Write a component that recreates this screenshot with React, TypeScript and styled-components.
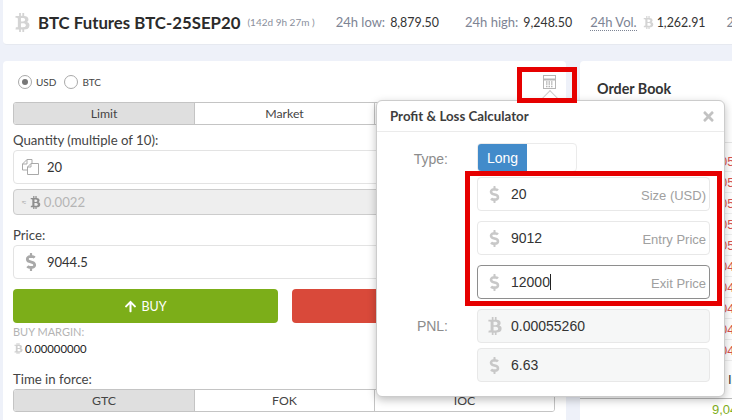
import React from 'react';
import styled, { createGlobalStyle } from 'styled-components';
import { FaArrowUp, FaBtc, FaDollarSign, FaTimes } from 'react-icons/fa';

const GlobalStyle = createGlobalStyle`
  html, body { margin: 0; padding: 0; height: 420px; overflow: hidden; background: #eef1f9; }
  * { box-sizing: border-box; }
  body { font-family: "Lato", "Noto Sans", sans-serif; color: #333; }
`;

const Page = styled.div`
  position: relative;
  width: 732px;
  height: 420px;
  overflow: hidden;
  display: flex;
  flex-direction: column;
  gap: 16px;
  padding-left: 3px;
`;

const Header = styled.header`
  height: 45px;
  width: 760px;
  flex: none;
  background: #fff;
  border-radius: 0 0 0 4px;
  border-bottom: 1px solid #e6e9f0;
  display: flex;
  align-items: center;
  padding-left: 10px;
  white-space: nowrap;
`;

const Title = styled.h1`
  margin: 0 0 0 6px;
  font-size: 16.8px;
  font-weight: 700;
  color: #2b2b2b;
`;

const Countdown = styled.span`
  margin-left: 7px;
  font-size: 10px;
  color: #8a8f9c;
`;

const Stat = styled.span<{ $gap: number }>`
  margin-left: ${(p) => p.$gap}px;
  font-size: 13px;
  color: #7d8494;
  display: inline-flex;
  align-items: center;
  gap: 5px;
`;

const StatValue = styled.span`
  font-size: 12.4px;
  color: #333;
`;

const Dotted = styled.span`
  border-bottom: 1px dotted #7d8494;
`;

const VolCoin = styled(FaBtc)`
  margin-right: -3px;
  color: #d4d4d4;
`;

const Body = styled.div`
  display: flex;
  gap: 14px;
  flex: 1;
`;

const OrderPanel = styled.section`
  width: 563px;
  flex: none;
  background: #fff;
  border-radius: 4px 4px 0 0;
  padding: 11px 11px 0 10px;
`;

const RadioRow = styled.div`
  height: 20px;
  display: flex;
  align-items: center;
  padding-left: 5px;
  font-size: 10px;
  color: #444;
`;

const Radio = styled.span<{ $on?: boolean }>`
  width: 14px;
  height: 14px;
  border-radius: 50%;
  border: 1px solid #a9a9a9;
  display: inline-flex;
  align-items: center;
  justify-content: center;
  margin-right: 4px;
  &::after {
    content: '';
    width: 6px;
    height: 6px;
    border-radius: 50%;
    background: ${(p) => (p.$on ? '#777' : 'transparent')};
  }
`;

const RadioLabel = styled.span`
  margin-right: 8px;
`;

const Tabs = styled.div<{ $top: number }>`
  margin-top: ${(p) => p.$top}px;
  height: 23px;
  display: grid;
  grid-template-columns: repeat(3, 1fr);
  border: 1px solid #c4c4c4;
  border-radius: 3px;
  overflow: hidden;
`;

const Tab = styled.div<{ $active?: boolean }>`
  display: flex;
  align-items: center;
  justify-content: center;
  font-size: 12.3px;
  color: #444;
  background: ${(p) => (p.$active ? '#dfdfdf' : '#fff')};
  & + & { border-left: 1px solid #c4c4c4; }
`;

const FieldLabel = styled.div<{ $top: number }>`
  margin-top: ${(p) => p.$top}px;
  font-size: 13.2px;
  line-height: 16px;
  color: #444;
`;

const InputBox = styled.div`
  margin-top: 2px;
  height: 34px;
  border: 1px solid #e3e3e3;
  border-radius: 4px;
  display: flex;
  align-items: center;
  font-size: 13px;
  color: #333;
`;

const IconSlot = styled.span`
  width: 33px;
  flex: none;
  display: flex;
  justify-content: center;
  color: #a9a9a9;
`;

const DisabledBox = styled.div`
  margin-top: 5px;
  height: 26px;
  background: #eee;
  border: 1px solid #ccc;
  border-radius: 4px;
  display: flex;
  align-items: center;
  gap: 2px;
  padding-left: 7px;
  font-size: 13.2px;
  color: #b5b5b5;
`;

const TinyApprox = styled.span`
  font-size: 10px;
`;

const ButtonRow = styled.div`
  margin-top: 10px;
  display: flex;
  gap: 14px;
`;

const TradeButton = styled.div<{ $color: string }>`
  width: 265px;
  flex: none;
  height: 34px;
  border-radius: 4px;
  background: ${(p) => p.$color};
  color: #fff;
  font-size: 12.5px;
  display: flex;
  align-items: center;
  justify-content: center;
  gap: 4px;
`;

const MarginLabel = styled.div`
  margin-top: 1px;
  font-size: 11px;
  line-height: 15px;
  color: #b4b4b4;
`;

const MarginValue = styled.div`
  margin-top: 2px;
  font-size: 11.3px;
  line-height: 15px;
  color: #222;
  display: flex;
  align-items: center;
  gap: 1px;
`;

const BookPanel = styled.section`
  flex: 1;
  background: #fff;
  border-radius: 4px 0 0 0;
  padding-top: 18px;
  font-family: "Liberation Sans", Arial, sans-serif;
  font-size: 13px;
  white-space: nowrap;
  overflow: hidden;
`;

const BookTitle = styled.h2`
  margin: 0 0 0 17px;
  font-family: "Lato", "Noto Sans", sans-serif;
  font-size: 14.3px;
  line-height: 19px;
  font-weight: 700;
  color: #333;
`;

const BookHead = styled.div`
  margin-top: 25px;
  height: 20px;
  border-bottom: 1px solid #e6e6e6;
`;

const AskRows = styled.div`
  margin-top: 8px;
`;

const AskRow = styled.div`
  height: 21px;
  line-height: 21px;
  padding-left: 122px;
  color: #d9534f;
  border-bottom: 1px solid #eee;
`;

const IndexRow = styled.div`
  margin-top: 8px;
  height: 30px;
  line-height: 22px;
  padding-left: 148px;
  color: #333;
  border-bottom: 1px solid #bbb;
`;

const BidRow = styled.div`
  height: 21px;
  line-height: 21px;
  padding-left: 132px;
  color: #7fae1b;
`;

// marker icon on the panel corner
const CalcTrigger = styled.span`
  position: absolute;
  left: 543px;
  top: 75px;
  color: #b5b5b5;
  display: flex;
`;

const Annotation = styled.div<{ $l: number; $t: number; $w: number; $h: number }>`
  position: absolute;
  left: ${(p) => p.$l}px;
  top: ${(p) => p.$t}px;
  width: ${(p) => p.$w}px;
  height: ${(p) => p.$h}px;
  border: 5px solid #e60000;
  z-index: 5;
`;

const Popover = styled.div`
  position: absolute;
  left: 376px;
  top: 100px;
  width: 349px;
  height: 297px;
  background: #fff;
  border: 1px solid #ccc;
  border-radius: 6px;
  box-shadow: 0 3px 8px rgba(0, 0, 0, 0.25);
  font-family: "Liberation Sans", Arial, sans-serif;
  z-index: 3;
  &::before {
    content: '';
    position: absolute;
    left: 166px;
    top: -8px;
    width: 13px;
    height: 13px;
    background: #fff;
    border-left: 1px solid #ccc;
    border-top: 1px solid #ccc;
    transform: rotate(45deg);
  }
`;

const PopTitle = styled.div`
  height: 31px;
  border-bottom: 1px solid #ebebeb;
  padding: 0 8px 0 13px;
  display: flex;
  align-items: center;
  justify-content: space-between;
  font-family: "Lato", "Noto Sans", sans-serif;
  font-weight: 700;
  font-size: 13.3px;
  color: #3d3d3d;
  position: relative;
`;

const Close = styled.span`
  display: flex;
  color: #c2c2c2;
`;

const PopBody = styled.div`
  display: grid;
  grid-template-columns: 71px 233px;
  column-gap: 29px;
  padding: 11px 15px 0 0;
  align-items: center;
`;

const RowLabel = styled.div<{ $top?: number }>`
  margin-top: ${(p) => p.$top ?? 0}px;
  text-align: right;
  font-size: 14px;
  color: #8c8c8c;
`;

const TypeToggle = styled.div`
  width: 100px;
  height: 29px;
  border: 1px solid #ebebeb;
  border-radius: 4px;
  overflow: hidden;
`;

const LongButton = styled.div`
  width: 49px;
  height: 100%;
  background: #428bca;
  color: #fff;
  font-size: 14px;
  display: flex;
  align-items: center;
  justify-content: center;
`;

const CalcInput = styled.div<{ $top: number; $focus?: boolean; $grey?: boolean }>`
  grid-column: 2;
  margin-top: ${(p) => p.$top}px;
  height: 34px;
  border: 1px solid ${(p) => (p.$focus ? '#8e8e8e' : '#e8e8e8')};
  border-radius: 4px;
  background: ${(p) => (p.$grey ? '#f6f7f7' : '#fff')};
  display: flex;
  align-items: center;
  font-size: 14px;
  color: #333;
  padding-right: 3px;
`;

const CalcIcon = styled.span`
  width: 33px;
  flex: none;
  display: flex;
  justify-content: center;
  color: #c8c8c8;
`;

const CalcHint = styled.span`
  margin-left: auto;
  font-size: 13px;
  color: #a0a0a0;
  padding-top: 2px;
`;

const Caret = styled.span`
  display: inline-block;
  width: 1px;
  height: 16px;
  background: #222;
  vertical-align: -3px;
`;

const Copies = () => (
  <svg width="17" height="16" viewBox="0 0 17 16" fill="none" stroke="#a9a9a9" strokeWidth="1">
    <path d="M5.5 11H.5V5L5 .5h5v4" />
    <path d="M5.5 15.5V8l3.5-3.500h7.500v11z" />
    <path d="M5 .5V5H.5M9 4.500V8H5.500" />
  </svg>
);

const Calculator = () => (
  <svg width="13" height="14" viewBox="0 0 13 14" fill="none" stroke="currentColor">
    <rect x=".5" y=".5" width="12" height="13" />
    <path d="M.5 4.500h12" strokeWidth="2" />
    <path d="M3 7h7M3 9h7M3 11.500h7" strokeDasharray="1.500 1" strokeWidth="1.500" />
  </svg>
);

const askRows = ['05', '05', '05', '05', '05', '04', '04', '04', '04', '04'];

export default function App() {
  return (
    <Page>
      <GlobalStyle />
      <Header>
        <FaBtc size={19} color="#d4d4d4" />
        <Title>BTC Futures BTC-25SEP20</Title>
        <Countdown>(142d 9h 27m )</Countdown>
        <Stat $gap={21}>24h low: <StatValue>8,879.50</StatValue></Stat>
        <Stat $gap={26}>24h high: <StatValue>9,248.50</StatValue></Stat>
        <Stat $gap={18}><Dotted>24h Vol.</Dotted> <VolCoin size={13} /> <StatValue>1,262.91</StatValue></Stat>
        <Stat $gap={21}>24h</Stat>
      </Header>
      <Body>
        <OrderPanel>
          <RadioRow>
            <Radio $on /><RadioLabel>USD</RadioLabel>
            <Radio /><RadioLabel>BTC</RadioLabel>
          </RadioRow>
          <Tabs $top={10}>
            <Tab $active>Limit</Tab>
            <Tab>Market</Tab>
            <Tab>Stop</Tab>
          </Tabs>
          <FieldLabel $top={7}>Quantity (multiple of 10):</FieldLabel>
          <InputBox><IconSlot><Copies /></IconSlot>20</InputBox>
          <DisabledBox>
            <TinyApprox>≈</TinyApprox>
            <FaBtc size={13} color="#8e8e8e" />
            0.0022
          </DisabledBox>
          <FieldLabel $top={12}>Price:</FieldLabel>
          <InputBox><IconSlot><FaDollarSign size={18} /></IconSlot>9044.5</InputBox>
          <ButtonRow>
            <TradeButton $color="#7cae19"><FaArrowUp size={13} /> BUY</TradeButton>
            <TradeButton $color="#d9493a">SELL</TradeButton>
          </ButtonRow>
          <MarginLabel>BUY MARGIN:</MarginLabel>
          <MarginValue><FaBtc size={11} color="#cfcfcf" />0.00000000</MarginValue>
          <FieldLabel $top={15}>Time in force:</FieldLabel>
          <Tabs $top={2}>
            <Tab $active>GTC</Tab>
            <Tab>FOK</Tab>
            <Tab>IOC</Tab>
          </Tabs>
        </OrderPanel>
        <BookPanel>
          <BookTitle>Order Book</BookTitle>
          <BookHead />
          <AskRows>
            {askRows.map((r, i) => <AskRow key={i}>9,0{r}</AskRow>)}
          </AskRows>
          <IndexRow>Index</IndexRow>
          <BidRow>9,044.50</BidRow>
        </BookPanel>
      </Body>

      <CalcTrigger><Calculator /></CalcTrigger>

      <Popover>
        <PopTitle>
          Profit &amp; Loss Calculator
          <Close><FaTimes size={15} /></Close>
        </PopTitle>
        <PopBody>
          <RowLabel $top={3}>Type:</RowLabel>
          <TypeToggle><LongButton>Long</LongButton></TypeToggle>
          <CalcInput $top={5}><CalcIcon><FaDollarSign size={17} /></CalcIcon>20<CalcHint>Size (USD)</CalcHint></CalcInput>
          <CalcInput $top={10}><CalcIcon><FaDollarSign size={17} /></CalcIcon>9012<CalcHint>Entry Price</CalcHint></CalcInput>
          <CalcInput $top={10} $focus><CalcIcon><FaDollarSign size={17} /></CalcIcon><span>12000<Caret /></span><CalcHint>Exit Price</CalcHint></CalcInput>
          <RowLabel $top={10}>PNL:</RowLabel>
          <CalcInput $top={10} $grey><CalcIcon><FaBtc size={18} /></CalcIcon>0.00055260</CalcInput>
          <CalcInput $top={5} $grey><CalcIcon><FaDollarSign size={17} /></CalcIcon>6.63</CalcInput>
        </PopBody>
      </Popover>

      <Annotation $l={517} $t={67} $w={60} $h={36} />
      <Annotation $l={465} $t={171} $w={257} $h={135} />
    </Page>
  );
}
